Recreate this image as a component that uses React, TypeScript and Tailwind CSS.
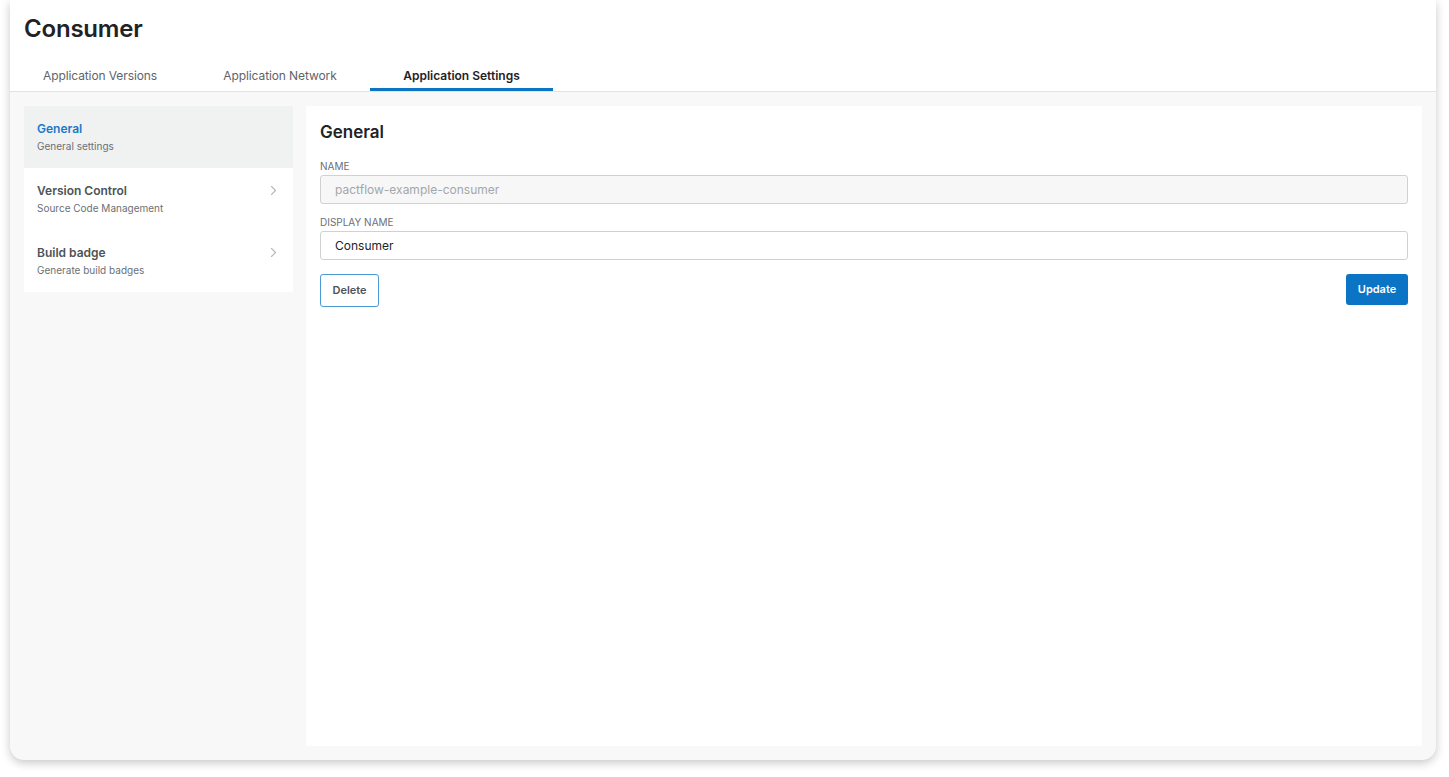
import { FC } from "react";

const Chevron: FC = () => (
    <svg width="7" height="11" viewBox="0 0 7 11" fill="none" className="text-[#b5b8bb]">
        <path d="M1.5 1.5L5.5 5.5L1.5 9.5" stroke="currentColor" strokeWidth="1.1" strokeLinecap="round" strokeLinejoin="round" />
    </svg>
);

const tabs = [
    { label: "Application Versions", active: false },
    { label: "Application Network", active: false },
    { label: "Application Settings", active: true },
];

const menu = [
    { title: "General", sub: "General settings", active: true },
    { title: "Version Control", sub: "Source Code Management", active: false },
    { title: "Build badge", sub: "Generate build badges", active: false },
];

const App: FC = () => {
    return (
        <div className="w-full h-[777px] bg-white font-['Inter',sans-serif] overflow-hidden">
            <div className="ml-[10px] w-[1426px] h-[760px] rounded-b-[14px] bg-[#f8f8f8] shadow-[0_3px_10px_rgba(0,0,0,0.22)] flex flex-col overflow-hidden">
                {/* header */}
                <div className="bg-white border-b border-[#e3e3e3]">
                    <div className="h-[58px] px-[14px] pt-[15px]">
                        <h1 className="text-[24px] leading-[28px] font-semibold text-[#1f2326] tracking-[-0.2px]">Consumer</h1>
                    </div>
                    <div className="flex h-[33px]">
                        {tabs.map((t) => (
                            <div
                                key={t.label}
                                className={
                                    t.active
                                        ? "w-[183px] flex items-center justify-center border-b-[3px] border-[#0b74c4] text-[12px] font-semibold text-[#1f2326] pt-[6px]"
                                        : "w-[180px] flex items-center justify-center border-b-[3px] border-transparent text-[12px] tracking-[-0.1px] text-[#5f6468] pt-[6px]"
                                }
                            >
                                {t.label}
                            </div>
                        ))}
                    </div>
                </div>

                {/* body */}
                <div className="flex-1 flex gap-[13px] p-[14px]">
                    <div className="w-[269px] self-start bg-white">
                        {menu.map((m) => (
                            <div
                                key={m.title}
                                className={
                                    m.active
                                        ? "h-[62px] flex items-center justify-between pl-[13px] pr-[16px] bg-[#f0f1f1]"
                                        : "h-[62px] flex items-center justify-between pl-[13px] pr-[16px]"
                                }
                            >
                                <div className="flex flex-col gap-[1px]">
                                    <span className={m.active ? "text-[12px] font-semibold text-[#1a7ac8]" : "text-[12px] font-semibold text-[#4d5358]"}>
                                        {m.title}
                                    </span>
                                    <span className="text-[10px] text-[#6b7075]">{m.sub}</span>
                                </div>
                                {!m.active && (
                                    <div className="self-start pt-[17px]">
                                        <Chevron />
                                    </div>
                                )}
                            </div>
                        ))}
                    </div>

                    <div className="flex-1 bg-white px-[14px] pt-[14px]">
                        <h2 className="text-[17px] leading-[24px] font-semibold text-[#1f2326]">General</h2>
                        <label className="block mt-[16px] mb-[3px] text-[10px] leading-[12px] text-[#6b7075] uppercase">Name</label>
                        <div className="h-[29px] flex items-center px-[14px] bg-[#f7f7f7] border border-[#cfd2d4] rounded-[3px] text-[12px] text-[#a3a7aa]">
                            pactflow-example-consumer
                        </div>
                        <label className="block mt-[12px] mb-[3px] text-[10px] leading-[12px] text-[#6b7075] uppercase">Display name</label>
                        <div className="h-[29px] flex items-center px-[14px] bg-white border border-[#cfd2d4] rounded-[3px] text-[12px] text-[#1f2326]">
                            Consumer
                        </div>
                        <div className="flex justify-between items-start mt-[14px]">
                            <button className="h-[33px] w-[59px] border border-[#4b9bd6] rounded-[3px] text-[11px] font-semibold text-[#4d5358]">
                                Delete
                            </button>
                            <button className="h-[31px] w-[62px] bg-[#0b74c4] rounded-[3px] text-[11px] font-semibold text-white">
                                Update
                            </button>
                        </div>
                    </div>
                </div>
            </div>
        </div>
    );
};

export default App;
